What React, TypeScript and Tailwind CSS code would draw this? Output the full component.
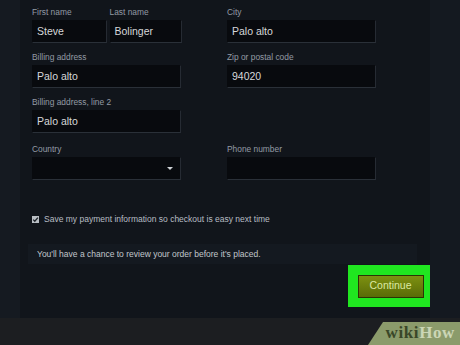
import React from "react";

const labelCls =
  "text-[8.4px] leading-[12px] text-[#939ba5] whitespace-nowrap";
const inputCls =
  "h-[23px] bg-[#080a0e] border border-[#080a0e] border-b-[#2a3038] border-r-[#262b33] flex items-center pl-[4px] text-[10.5px] text-[#d6d8da]";

function Field({
  label,
  value,
  w,
  children,
}: {
  label: string;
  value?: string;
  w: string;
  children?: React.ReactNode;
}) {
  return (
    <div className={`flex flex-col gap-[2px] ${w}`}>
      <div className={labelCls}>{label}</div>
      <div className={inputCls}>
        {value}
        {children}
      </div>
    </div>
  );
}

export default function App() {
  return (
    <div
      className="w-[460px] h-[345px] flex flex-col overflow-hidden bg-[#151a21]"
      style={{ fontFamily: '"Liberation Sans", Arial, sans-serif' }}
    >
      <div className="flex h-[318px]">
        <div className="w-[20px] bg-[#151a21]" />
        <div className="w-[410px] bg-[#11151b] pl-[12px] pt-[6px] flex flex-col">
          <div className="flex gap-[45px]">
            <div className="flex flex-col w-[150px]">
              <div className="flex gap-[3px]">
                <Field label="First name" value="Steve" w="w-[75px]" />
                <Field label="Last name" value="Bolinger" w="w-[73px]" />
              </div>
              <div className="mt-[8px]">
                <Field label="Billing address" value="Palo alto" w="w-[149px]" />
              </div>
              <div className="mt-[8px]">
                <Field label="Billing address, line 2" value="Palo alto" w="w-[149px]" />
              </div>
              <div className="mt-[10px]">
                <Field label="Country" w="w-[149px]">
                  <div className="ml-auto mr-[7px] w-0 h-0 border-l-[3px] border-r-[3px] border-t-[3px] border-l-transparent border-r-transparent border-t-[#d0d4d8]" />
                </Field>
              </div>
            </div>
            <div className="flex flex-col w-[150px]">
              <Field label="City" value="Palo alto" w="w-[149px]" />
              <div className="mt-[8px]">
                <Field label="Zip or postal code" value="94020" w="w-[149px]" />
              </div>
              <div className="mt-[55px]">
                <Field label="Phone number" w="w-[149px]" />
              </div>
            </div>
          </div>

          <div className="mt-[34px] flex items-center gap-[5px] h-[10px]">
            <div className="w-[7px] h-[7px] bg-[#b9bec4] flex items-center justify-center">
              <svg width="7" height="7" viewBox="0 0 7 7">
                <path d="M1.2 3.6 L2.8 5.2 L5.9 1.6" stroke="#1d2228" strokeWidth="1.3" fill="none" />
              </svg>
            </div>
            <span className="text-[8.5px] text-[#b7bdc4] whitespace-nowrap">
              Save my payment information so checkout is easy next time
            </span>
          </div>

          <div className="mt-[20px] ml-[-4px] w-[389px] h-[20px] bg-[#141920] flex items-center pl-[9px]">
            <span className="text-[8.5px] text-[#c2c7cc] whitespace-nowrap">
              You'll have a chance to review your order before it's placed.
            </span>
          </div>

          <div className="mt-[1px] flex justify-end mr-[-3px]">
            <div className="w-[85px] h-[42px] bg-[#20e620] flex items-center justify-center">
              <div className="w-[66px] h-[23px] border border-[#2b3405] bg-gradient-to-b from-[#7d9110] to-[#5a6b08] flex items-center justify-center text-[10.5px] text-[#dbe9a2]">
                Continue
              </div>
            </div>
          </div>
        </div>
        <div className="flex-1 bg-[#141920]" />
      </div>
      <div className="relative flex-1 bg-[#1c1e21]">
        <svg className="absolute right-0 bottom-0" width="92" height="23" viewBox="0 0 92 23">
          <polygon points="15,0 92,0 92,23 0,23" fill="#8b9b6b" />
        </svg>
        <div
          className="absolute right-[5px] bottom-[2px] text-[17px] leading-[20px] font-bold tracking-[0.6px]"
          style={{ fontFamily: '"Liberation Serif", "Times New Roman", serif' }}
        >
          <span className="text-[#3a4728]">wiki</span>
          <span className="text-[#cbd6b6]">How</span>
        </div>
      </div>
    </div>
  );
}
